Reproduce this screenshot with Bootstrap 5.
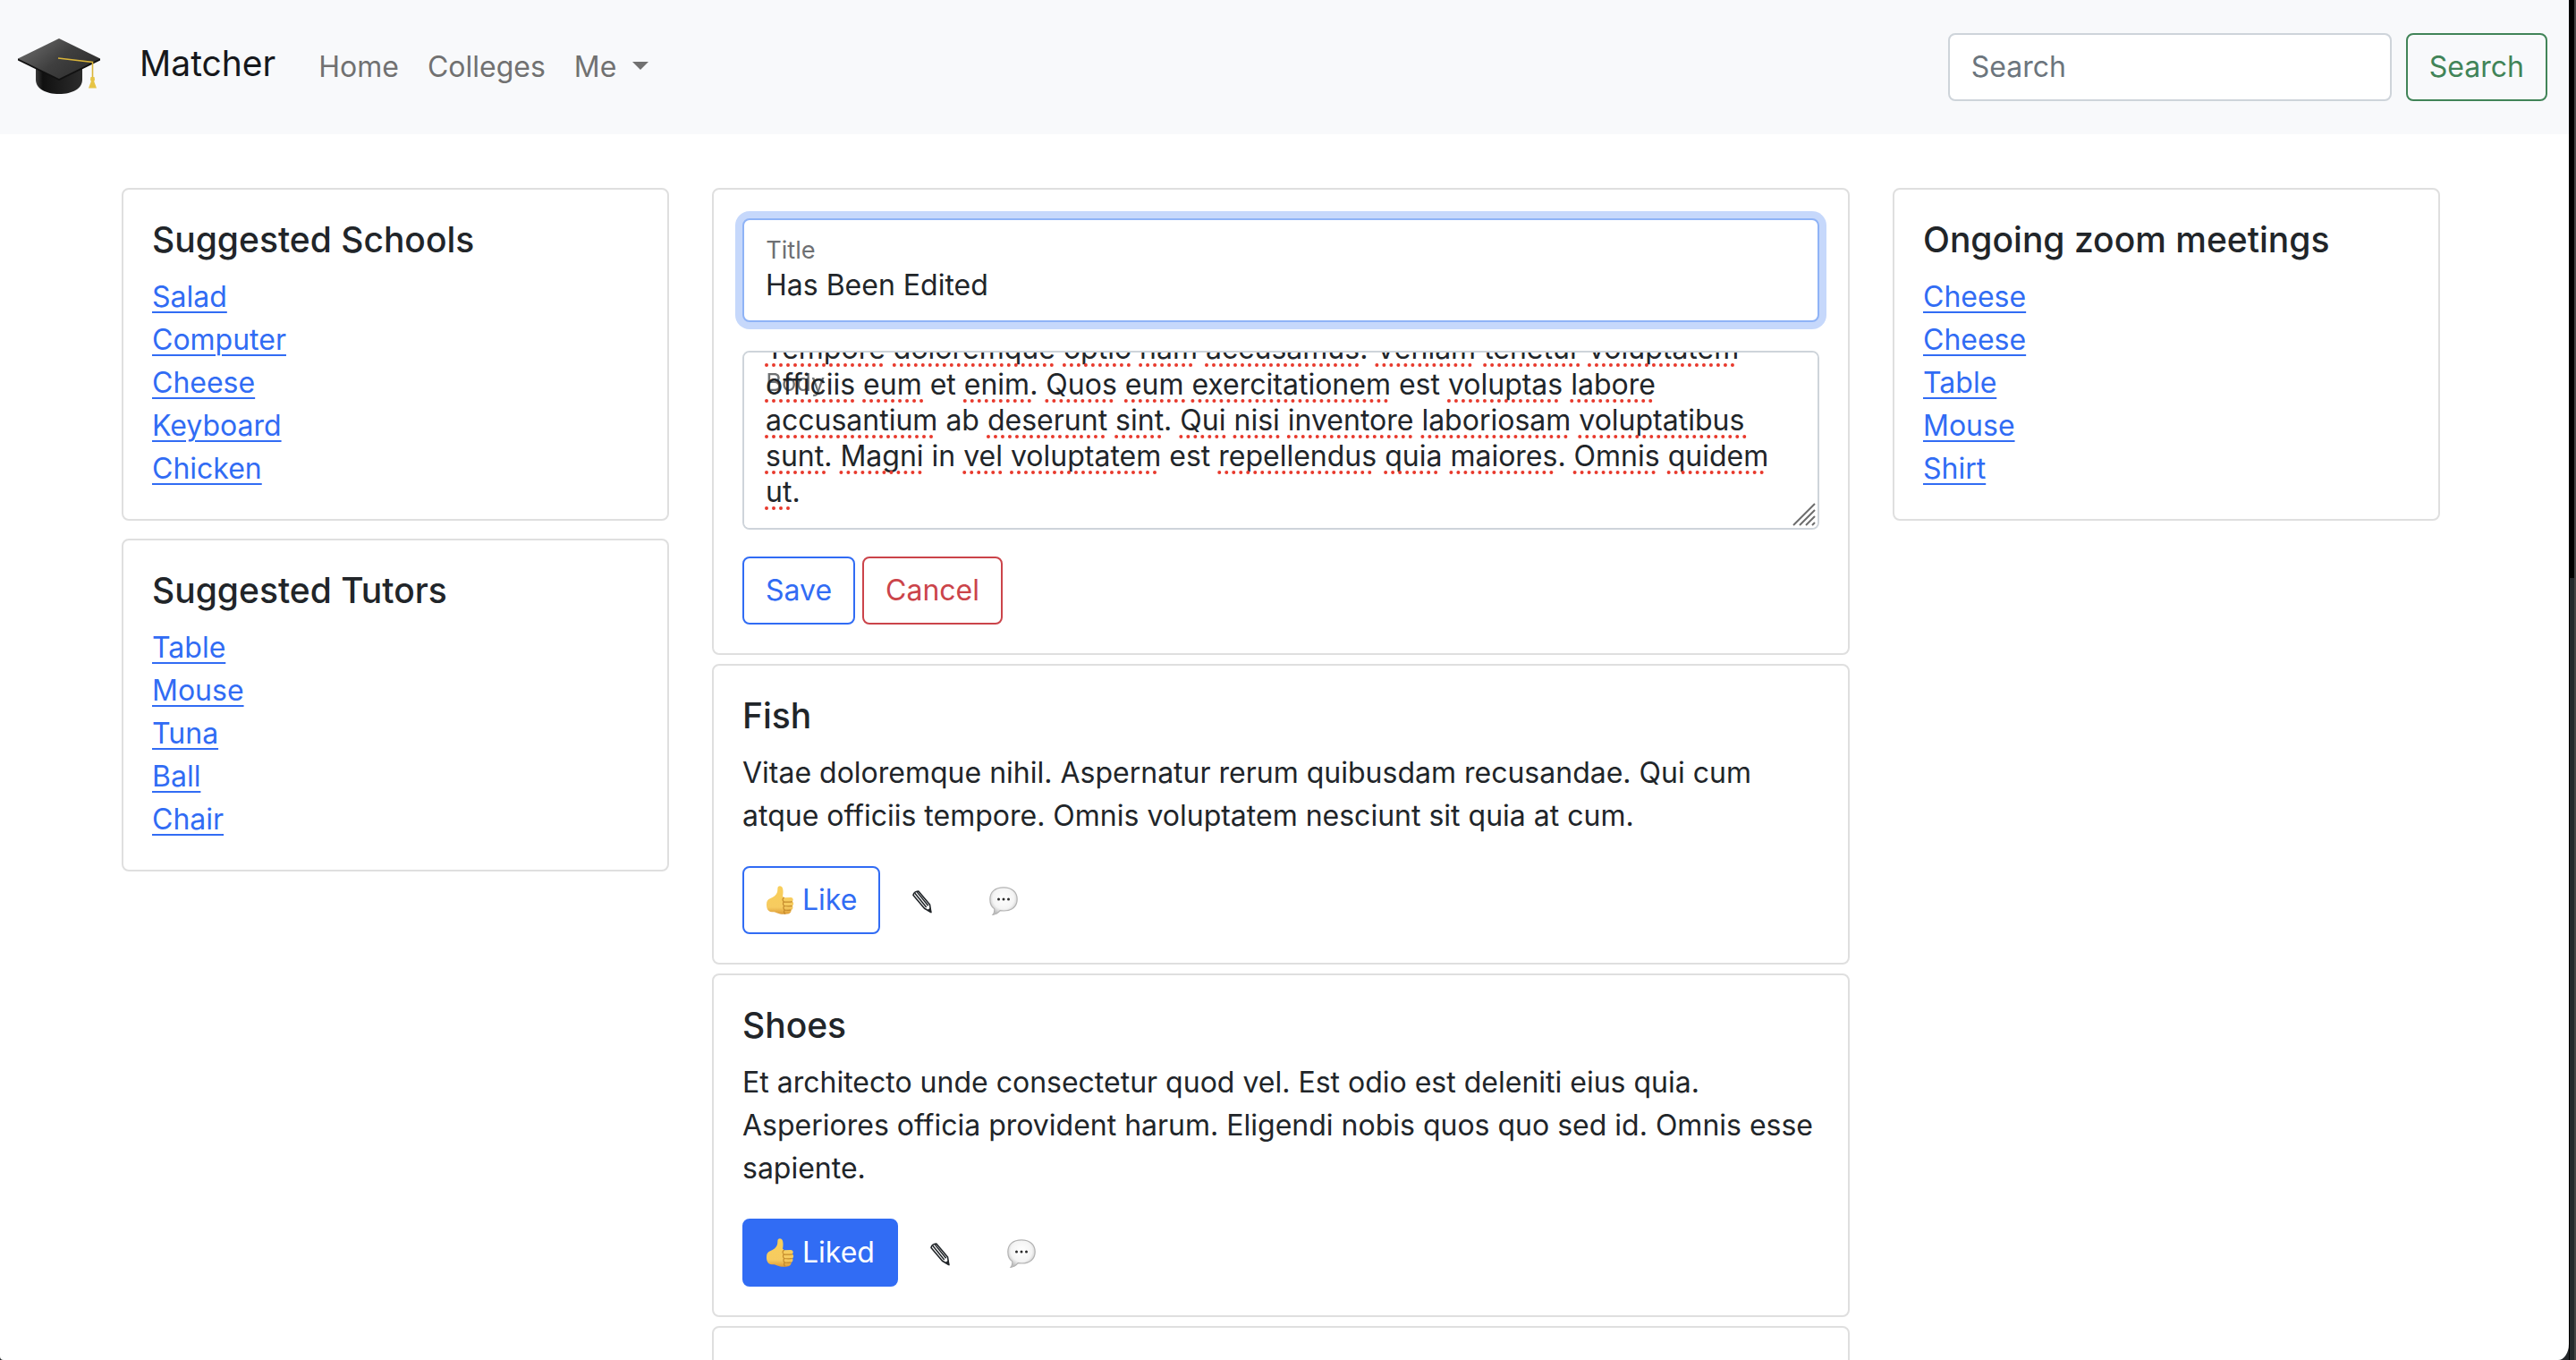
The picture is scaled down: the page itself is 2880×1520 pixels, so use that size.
<!DOCTYPE html>
<html lang="en">
<head>
<meta charset="utf-8">
<meta name="viewport" content="width=device-width, initial-scale=1">
<title>Matcher</title>
<link href="https://cdn.jsdelivr.net/npm/bootstrap@5.3.0/dist/css/bootstrap.min.css" rel="stylesheet">
<style>
  html { font-size: 32px; }
  :root {
    --bs-border-width: 2px;
    --bs-border-radius: 8px;
    --ui-blue: #316cf4;
    --ui-green: #418458;
    --ui-red: #cb444a;
    --ui-line: #dfdfdf;
  }
  body {
    font-family: Inter, "Liberation Sans", sans-serif;
    color: #212529;
    background: #25282b;
  }
  a { color: var(--ui-blue); text-underline-offset: 5px; text-decoration-thickness: 2px; }
  .page-pane { min-width: 0; background: #fff; border-radius: 0 0 12px 4px / 0 0 18px 4px; }
  .page-edge { flex: 0 0 8px; border-left: 1px solid #000; border-right: 2px solid #454343; background: linear-gradient(#000 646px, #25282b 646px); }

  .navbar { min-height: 150px; background: #f8f9fb; }
  .navbar .container-fluid { padding-left: 20px; padding-right: 24px; }
  .navbar-brand { margin-right: 32px; padding: 0; font-size: 39px; color: #16181b; }
  .brand-name { padding-bottom: 8px; }
  .brand-logo { width: 92px; height: 64px; margin-right: 44px; }
  .navbar .nav-link { color: #717171; }
  .search-box { width: 496px; }
  .form-control { border-width: 2px; border-color: #ced4da; border-radius: 8px; color: #212529; }
  .form-control::placeholder { color: #6c757d; opacity: 1; }

  .btn { --bs-btn-border-width: 2px; --bs-btn-border-radius: 8px; border-width: 2px; }
  .btn-outline-primary { --bs-btn-color: var(--ui-blue); --bs-btn-border-color: var(--ui-blue); }
  .btn-primary { --bs-btn-bg: var(--ui-blue); --bs-btn-border-color: var(--ui-blue); }
  .btn-outline-success { --bs-btn-color: var(--ui-green); --bs-btn-border-color: var(--ui-green); }
  .btn-outline-danger { --bs-btn-color: var(--ui-red); --bs-btn-border-color: var(--ui-red); }

  .feed { padding: 60px 8px 0 0; }
  .feed .container { max-width: 2640px; --bs-gutter-x: 48px; }
  .feed .row { --bs-gutter-x: 48px; }
  .card { --bs-card-border-width: 2px; --bs-card-border-color: var(--ui-line); --bs-card-border-radius: 8px; --bs-card-inner-border-radius: 6px; border-width: 2px; }
  .card-title { font-size: 39px; line-height: 48px; margin-bottom: 16px; }
  .side-stack { gap: 20px; }
  .post-stack { gap: 10px; }
  .post-next { min-height: 336px; }
  .btn-row { gap: 8px; }

  .title-field, .title-field:focus { border-color: #8fb3f6; box-shadow: 0 0 0 8px #c6d8fb; }
  .form-floating > textarea.body-field { height: 200px; line-height: 40px; resize: none; overflow-y: scroll; scrollbar-width: none; white-space: pre; }
  .body-field::-webkit-scrollbar { display: none; }
  .form-floating > label::after { display: none; }
  .edit-actions { margin-top: 30px; }
  .spell-layer { position: absolute; top: 2px; left: 2px; width: calc(100% - 4px); height: 196px; pointer-events: none; overflow: hidden; }
  .grip { position: absolute; right: 4px; bottom: 4px; width: 26px; height: 26px; pointer-events: none; }

  .thumb { width: 32px; height: 34px; margin-right: 9px; }
  .btn-icon { padding-left: 26px; padding-right: 26px; border-color: transparent; line-height: 1; }
  .pencil { width: 22px; height: 26px; }
  .bubble { width: 32px; height: 32px; }
</style>
</head>
<body class="d-flex vh-100 overflow-hidden">

<svg width="0" height="0" class="position-absolute" aria-hidden="true">
  <defs>
    <linearGradient id="skin" x1="0" y1="0" x2="0" y2="1">
      <stop offset="0" stop-color="#f9cf5a"/><stop offset=".75" stop-color="#f6cb60"/><stop offset="1" stop-color="#dc9a36"/>
    </linearGradient>
    <radialGradient id="cloud" cx=".5" cy=".4" r=".6">
      <stop offset="0" stop-color="#fff"/><stop offset=".65" stop-color="#f4f4f4"/><stop offset="1" stop-color="#bdbdbd"/>
    </radialGradient>
    <linearGradient id="boardTop" x1="0" y1=".2" x2="1" y2=".8">
      <stop offset="0" stop-color="#6c6c6c"/><stop offset=".5" stop-color="#3f3f3f"/><stop offset="1" stop-color="#2c2c2c"/>
    </linearGradient>
    <linearGradient id="capBody" x1="0" y1="0" x2="1" y2="0">
      <stop offset="0" stop-color="#3a3a3a"/><stop offset=".15" stop-color="#101010"/><stop offset=".5" stop-color="#1c1c1c"/><stop offset="1" stop-color="#2c2c2c"/>
    </linearGradient>
    <symbol id="i-thumb" viewBox="0 0 32 34">
      <path fill="url(#skin)" d="M14 2c2-1.500 4.500-.5 5.200 2.500.6 3 .3 6-.2 8.200 1.300.6 1.500 1.500 1.500 1.500l7.500-.2c2.800.2 3.500 3 1.800 4.500 1.800 1.300 1.800 3.700.2 5 1 1.800.3 3.800-1.500 4.600.3 2.600-1.300 4-4.500 4.500-4 .5-8 .4-11-1-2-1-3.500-1.400-6-1.300C2.500 30 1 26.500 1 22c0-4 1.300-6 4.500-7 3.500-1.200 6.500-3.800 7.500-7 .6-2 0-5 1-6z"/>
      <path fill="none" stroke="#c48a2c" stroke-width="1.200" stroke-linecap="round" d="M20.500 14.300c-1.800.5-2 3.500 0 4.500 3 .5 6.500.3 9 0M20.500 18.800c-1.500 1.200-1.300 3.700.3 4.700 3 .5 6 .4 8.500.2M20.800 23.500c-1.300 1.200-1 3.500.5 4.500 2.500.5 4.500.4 6.500.2M21.300 28c-1 1.200-.8 3 .2 4"/>
    </symbol>
    <symbol id="i-pencil" viewBox="0 0 22 26">
      <path fill="none" stroke="#212529" stroke-width="1.600" stroke-linejoin="round" d="M1 5.500C1.500 3 4 1.200 6.800 1L19.500 16l1.300 8.500-7.300-4.300z"/>
      <path fill="none" stroke="#212529" stroke-width="1.500" d="M2.800 3.200L15.700 19M5 1.600L17.700 17.300"/>
      <path fill="#212529" d="M21.500 25.500l-.9-6.200-4.300 3.300z"/>
    </symbol>
    <symbol id="i-bubble" viewBox="0 0 32 32">
      <path fill="url(#cloud)" stroke="#b4b4b4" stroke-width="1.200" d="M16 .8c9.500 0 15.200 5.300 15.200 13.200S25.500 27 16.500 27c-1.800 0-3 0-4.300-.3-2.200 2.500-5 4.300-8.200 4.700 1.500-1.800 2-4 1.700-6.600C2.300 22.500.8 18.800.8 14 .8 6 6.500.8 16 .8z"/>
      <g fill="#2b2b2b"><circle cx="10.500" cy="14" r="1.500"/><circle cx="16" cy="14" r="1.500"/><circle cx="21.500" cy="14" r="1.500"/></g>
    </symbol>
  </defs>
</svg>

<div class="page-pane flex-grow-1 overflow-hidden">
  <nav class="navbar navbar-expand-lg">
    <div class="container-fluid">
      <a class="navbar-brand d-flex align-items-center" href="#">
        <svg class="brand-logo" viewBox="0 0 92 64" aria-hidden="true">
          <path fill="url(#capBody)" d="M20 28h52v18c0 10-11 16-26 16S20 56 20 46z"/>
          <path fill="#111" d="M0 24.500L46 47l46-22.500v-2H0z"/>
          <path fill="url(#boardTop)" d="M46 0l46 22.500L46 45 0 22.500z"/>
          <path fill="none" stroke="#d9b43a" stroke-width="1.600" d="M45 22l38.500 4.500v18"/>
          <path fill="#e6c445" d="M81.500 43h4l.5 3-.8 2 2.800 7.500h-9l2.800-7.500-.8-2z"/>
        </svg>
        <span class="brand-name">Matcher</span>
      </a>
      <ul class="navbar-nav me-auto">
        <li class="nav-item"><a class="nav-link" href="#">Home</a></li>
        <li class="nav-item"><a class="nav-link" href="#">Colleges</a></li>
        <li class="nav-item dropdown"><a class="nav-link dropdown-toggle" href="#" role="button" data-bs-toggle="dropdown">Me </a></li>
      </ul>
      <form class="d-flex" role="search">
        <input class="form-control search-box me-2" type="search" placeholder="Search" aria-label="Search">
        <button class="btn btn-outline-success" type="button">Search</button>
      </form>
    </div>
  </nav>

  <main class="feed">
    <div class="container">
      <div class="row">
        <aside class="col-3">
          <div class="d-flex flex-column side-stack">
            <section class="card">
              <div class="card-body">
                <h5 class="card-title">Suggested Schools</h5>
                <ul class="list-unstyled mb-0">
                  <li><a href="#">Salad</a></li>
                  <li><a href="#">Computer</a></li>
                  <li><a href="#">Cheese</a></li>
                  <li><a href="#">Keyboard</a></li>
                  <li><a href="#">Chicken</a></li>
                </ul>
              </div>
            </section>
            <section class="card">
              <div class="card-body">
                <h5 class="card-title">Suggested Tutors</h5>
                <ul class="list-unstyled mb-0">
                  <li><a href="#">Table</a></li>
                  <li><a href="#">Mouse</a></li>
                  <li><a href="#">Tuna</a></li>
                  <li><a href="#">Ball</a></li>
                  <li><a href="#">Chair</a></li>
                </ul>
              </div>
            </section>
          </div>
        </aside>

        <div class="col-6">
          <div class="d-flex flex-column post-stack">
            <form class="card">
              <div class="card-body">
                <div class="form-floating mb-3">
                  <input type="text" class="form-control title-field" id="postTitle" placeholder="Title" value="Has Been Edited">
                  <label for="postTitle">Title</label>
                </div>
                <div class="form-floating">
                  <textarea class="form-control body-field" id="postBody" placeholder="Body" spellcheck="false">Tempore doloremque optio nam accusamus. Veniam tenetur voluptatem
officiis eum et enim. Quos eum exercitationem est voluptas labore
accusantium ab deserunt sint. Qui nisi inventore laboriosam voluptatibus
sunt. Magni in vel voluptatem est repellendus quia maiores. Omnis quidem
ut.</textarea>
                  <label for="postBody">Body</label>
                  <svg class="spell-layer" id="spellLayer" aria-hidden="true"></svg>
                  <svg class="grip" viewBox="0 0 26 26" aria-hidden="true">
                    <path stroke="#6d6d6d" stroke-width="2" d="M1 25L25 1M8 25L25 8M15 25L25 15M22 25L25 22"/>
                  </svg>
                </div>
                <div class="d-flex btn-row edit-actions">
                  <button type="button" class="btn btn-outline-primary">Save</button>
                  <button type="button" class="btn btn-outline-danger">Cancel</button>
                </div>
              </div>
            </form>

            <article class="card">
              <div class="card-body">
                <h5 class="card-title">Fish</h5>
                <p class="mb-3">Vitae doloremque nihil. Aspernatur rerum quibusdam recusandae. Qui cum atque officiis tempore. Omnis voluptatem nesciunt sit quia at cum.</p>
                <div class="d-flex btn-row">
                  <button type="button" class="btn btn-outline-primary d-flex align-items-center"><svg class="thumb" aria-hidden="true"><use href="#i-thumb"/></svg>Like</button>
                  <button type="button" class="btn btn-icon" aria-label="Edit"><svg class="pencil" aria-hidden="true"><use href="#i-pencil"/></svg></button>
                  <button type="button" class="btn btn-icon" aria-label="Comment"><svg class="bubble" aria-hidden="true"><use href="#i-bubble"/></svg></button>
                </div>
              </div>
            </article>

            <article class="card">
              <div class="card-body">
                <h5 class="card-title">Shoes</h5>
                <p class="mb-3">Et architecto unde consectetur quod vel. Est odio est deleniti eius quia. Asperiores officia provident harum. Eligendi nobis quos quo sed id. Omnis esse sapiente.</p>
                <div class="d-flex btn-row">
                  <button type="button" class="btn btn-primary d-flex align-items-center"><svg class="thumb" aria-hidden="true"><use href="#i-thumb"/></svg>Liked</button>
                  <button type="button" class="btn btn-icon" aria-label="Edit"><svg class="pencil" aria-hidden="true"><use href="#i-pencil"/></svg></button>
                  <button type="button" class="btn btn-icon" aria-label="Comment"><svg class="bubble" aria-hidden="true"><use href="#i-bubble"/></svg></button>
                </div>
              </div>
            </article>

            <article class="card post-next"></article>
          </div>
        </div>

        <aside class="col-3">
          <section class="card">
            <div class="card-body">
              <h5 class="card-title">Ongoing zoom meetings</h5>
              <ul class="list-unstyled mb-0">
                <li><a href="#">Cheese</a></li>
                <li><a href="#">Cheese</a></li>
                <li><a href="#">Table</a></li>
                <li><a href="#">Mouse</a></li>
                <li><a href="#">Shirt</a></li>
              </ul>
            </div>
          </section>
        </aside>
      </div>
    </div>
  </main>
</div>
<div class="page-edge"></div>

<script src="https://cdn.jsdelivr.net/npm/bootstrap@5.3.0/dist/js/bootstrap.bundle.min.js"></script>
<script>
  // Dotted red marks under every word that the dictionary does not know.
  const field = document.getElementById('postBody');
  const layer = document.getElementById('spellLayer');
  const known = new Set(['et', 'est', 'ab', 'in']);

  function markSpelling() {
    const style = getComputedStyle(field);
    const pen = document.createElement('canvas').getContext('2d');
    pen.font = style.fontWeight + ' ' + style.fontSize + ' ' + style.fontFamily;
    const left = parseFloat(style.paddingLeft);
    const top = parseFloat(style.paddingTop) - field.scrollTop;
    const lineHeight = parseFloat(style.lineHeight);
    layer.replaceChildren();
    field.value.split('\n').forEach((line, row) => {
      for (const hit of line.matchAll(/[A-Za-z]+/g)) {
        if (known.has(hit[0])) continue;
        const x = left + pen.measureText(line.slice(0, hit.index)).width;
        const mark = document.createElementNS('http://www.w3.org/2000/svg', 'line');
        const y = top + (row + 1) * lineHeight - 2;
        mark.setAttribute('x1', x + 1);
        mark.setAttribute('x2', x + pen.measureText(hit[0]).width);
        mark.setAttribute('y1', y);
        mark.setAttribute('y2', y);
        mark.setAttribute('stroke', '#e8392c');
        mark.setAttribute('stroke-width', '4');
        mark.setAttribute('stroke-linecap', 'round');
        mark.setAttribute('stroke-dasharray', '0 8');
        layer.append(mark);
      }
    });
  }
  field.scrollTop = field.scrollHeight;
  field.addEventListener('scroll', markSpelling);
  field.addEventListener('input', markSpelling);
  markSpelling();
</script>
</body>
</html>
